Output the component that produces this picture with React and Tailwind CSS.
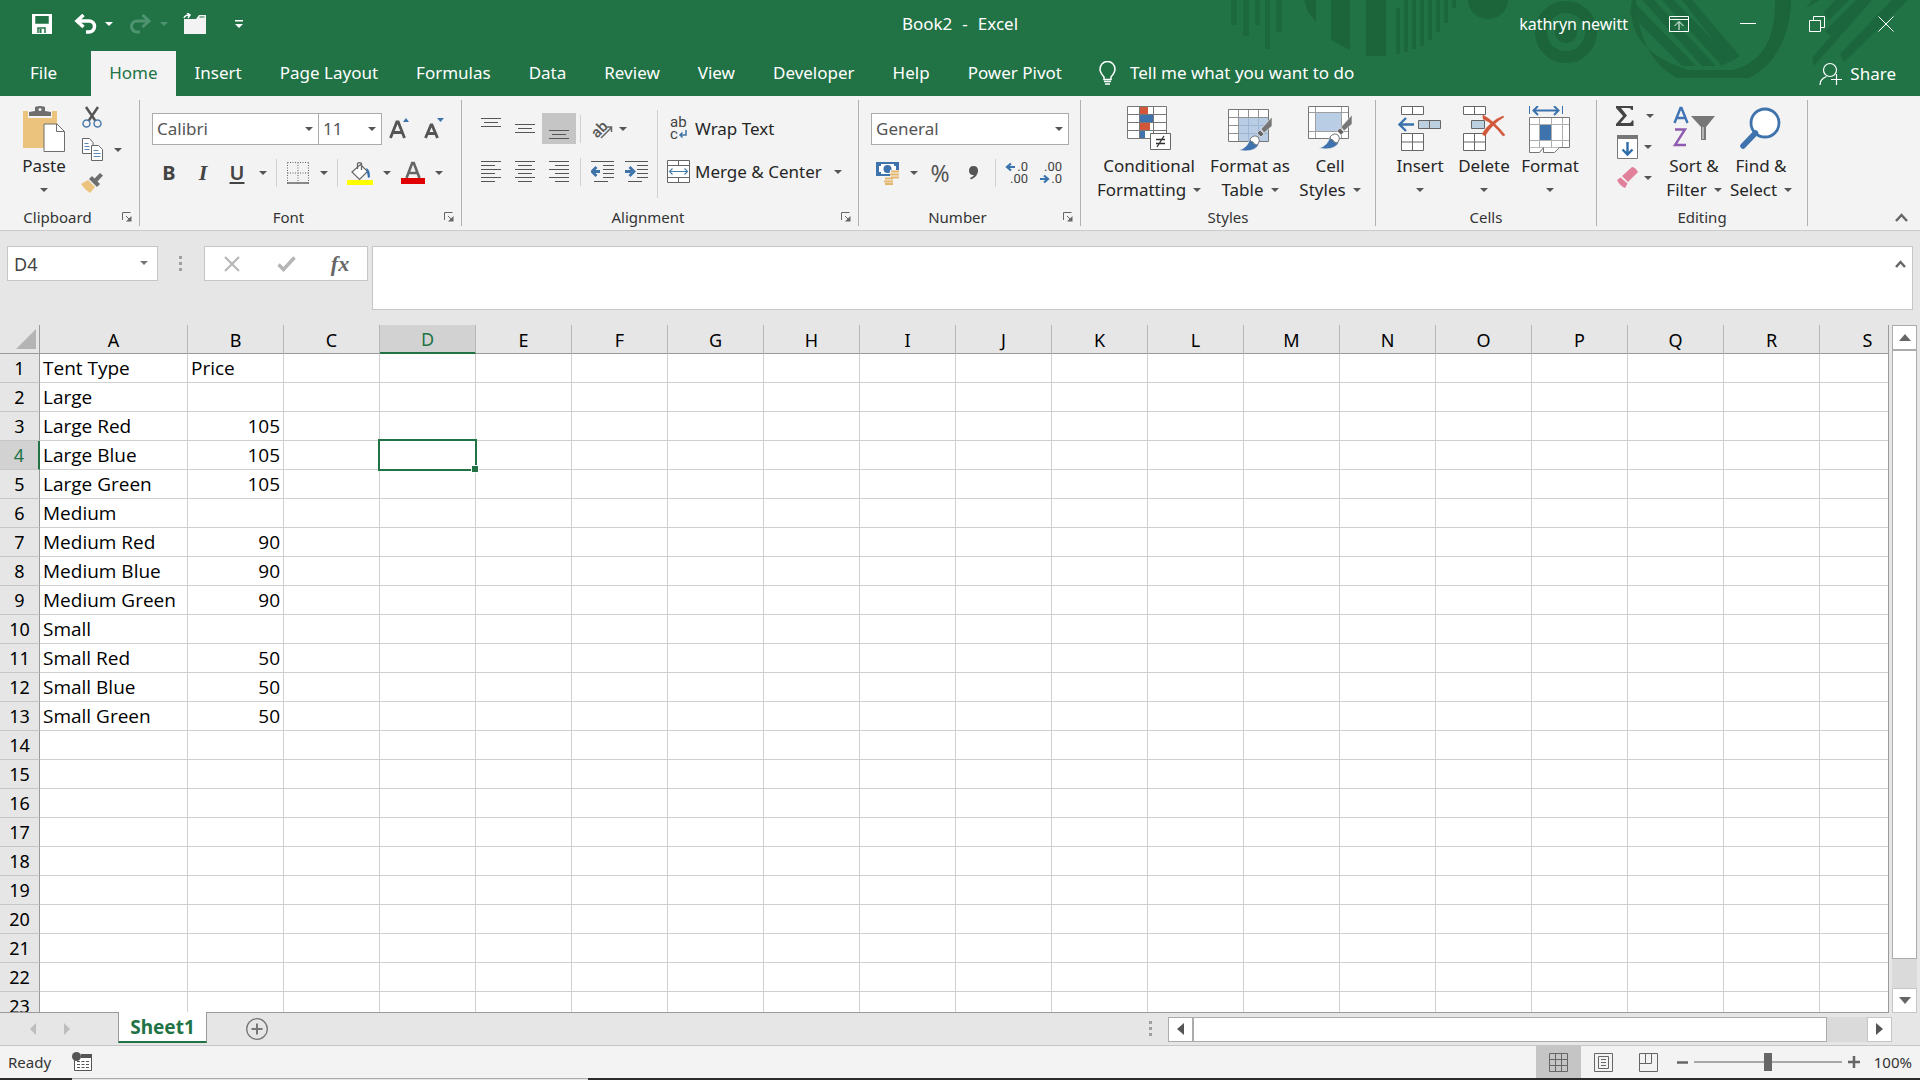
import { useState } from 'react';
import clsx from 'clsx';

const TABS = ['File', 'Home', 'Insert', 'Page Layout', 'Formulas', 'Data', 'Review', 'View', 'Developer', 'Help', 'Power Pivot'];
const COLUMNS = 'ABCDEFGHIJKLMNOPQRS'.split('');
const ROW_COUNT = 23;

const SHEET = {
  A1: 'Tent Type', B1: 'Price',
  A2: 'Large',
  A3: 'Large Red', B3: 105,
  A4: 'Large Blue', B4: 105,
  A5: 'Large Green', B5: 105,
  A6: 'Medium',
  A7: 'Medium Red', B7: 90,
  A8: 'Medium Blue', B8: 90,
  A9: 'Medium Green', B9: 90,
  A10: 'Small',
  A11: 'Small Red', B11: 50,
  A12: 'Small Blue', B12: 50,
  A13: 'Small Green', B13: 50,
};

/* ---------- shared bits ---------- */

function Caret({ className = 'text-[#555]' }) {
  return (
    <svg width="8" height="4" viewBox="0 0 8 4" className={clsx('shrink-0', className)}>
      <path d="M0 0h8L4 4z" fill="currentColor" />
    </svg>
  );
}

function Tool({ label, active, className = 'w-[34px]', children }) {
  return (
    <button
      type="button"
      aria-label={label}
      className={clsx('h-full flex items-center justify-center shrink-0', className, active && 'bg-[#c5c5c5]')}
    >
      {children}
    </button>
  );
}

function CaretTool({ label }) {
  return (
    <Tool label={label} className="w-[18px]">
      <Caret />
    </Tool>
  );
}

function Divider({ className = 'h-7' }) {
  return <div className={clsx('w-px mx-1 bg-[#d0d0d0] shrink-0 self-center', className)} />;
}

function BigButton({ icon, lines, className }) {
  return (
    <button type="button" className={clsx('flex flex-col items-center shrink-0 pt-1.5 text-[17px] leading-6 text-[#262626]', className)}>
      <span className="h-12 flex justify-center">{icon}</span>
      <span className="whitespace-nowrap">{lines[0]}</span>
      <span className="h-6 flex items-center gap-[7px] whitespace-nowrap">
        {lines[1]}
        <Caret />
      </span>
    </button>
  );
}

function Group({ title, launcher, className, children }) {
  return (
    <section className="flex flex-col border-r border-[#b1b1b1] shrink-0" aria-label={title}>
      <div className={clsx('h-[108px] flex items-start', className)}>{children}</div>
      <div className="flex items-center h-[18px]">
        <span className="flex-1 text-center text-[15px] leading-5 text-[#333]">{title}</span>
        {launcher && (
          <button type="button" aria-label={`${title} settings`} className="w-6 flex justify-center">
            <svg width="10" height="10" viewBox="0 0 10 10" fill="none" stroke="#666">
              <path d="M.5 8V.5H8.500M4 4l4 4" />
              <path d="M9.500 4v5.500H4z" fill="#666" stroke="none" />
            </svg>
          </button>
        )}
      </div>
    </section>
  );
}

function SelectBox({ label, value, className }) {
  return (
    <div className={clsx('relative h-8', className)}>
      <select
        aria-label={label}
        defaultValue={value}
        className="appearance-none w-full h-full bg-white border border-[#ababab] pl-1 text-[17px] text-[#555] outline-none"
      >
        <option>{value}</option>
      </select>
      <span className="absolute right-1.5 top-3.5 pointer-events-none">
        <Caret />
      </span>
    </div>
  );
}

/* ---------- title bar ---------- */

function TitleArt() {
  return (
    <svg className="absolute right-0 top-0 opacity-80" width="700" height="96" viewBox="1220 0 700 96" fill="#1b6239">
      <path d="M1231 0h6v25h-6zM1243 0h6v36h-6zM1255 0h5v25h-5zM1265 0h5v49h-5zM1276 0h6v32h-6z" opacity=".7" />
      <path d="M1304 0h12v22l-8-10zM1331 0h19v50l-19-10zM1366 0h20v56h-20z" />
      <path d="M1396 8h4v46h-4zM1404 0h4v52h-4zM1412 0h4v49h-4zM1420 0h4v46h-4zM1428 0h4v40h-4zM1436 0h4v32h-4zM1444 0h4v23h-4zM1452 0h4v8h-4z" opacity=".8" />
      <path d="M1468 0a20 19 0 0 0 40 0z" />
      <circle cx="1566" cy="32" r="25" fill="none" stroke="#1b6239" strokeWidth="12" />
      <circle cx="1566" cy="32" r="11" />
      <path d="M1608 0h24q-6 44 40 64l16 6h45q44-12 42-70h16v8q-6 52-42 70h-72q-38-20-41-78z" />
      <path d="M1632 0l64 66h-14l-52-52zM1642 0h12l62 66h-14zM1662 0h12l58 60-10 6zM1682 0h10l48 56-10 6z" opacity=".85" />
      <path d="M1820 0h-8l-6 8zM1835 0h14l-20 20-6-7zM1872 0l-58 66-2-8 50-58zM1892 0h16l-64 62-4-8zM1856 0h10l-36 36-5-5z" opacity=".85" />
    </svg>
  );
}

function TitleBar() {
  return (
    <div className="relative h-[47px] mb-1 flex items-center text-white text-[16px]">
      <div className="flex-1">
        <div className="flex items-center pl-2.5">
          <Tool label="Save" className="w-16">
            <svg width="20" height="20" viewBox="0 0 20 20" fill="none" stroke="#fff" strokeWidth="2">
              <path d="M1 1h18v18H1z" />
              <path d="M1 11h18v8H1z" fill="#fff" stroke="none" />
              <path d="M6 19v-5h7v5" stroke="#217346" strokeWidth="1.5" />
              <path d="M8.500 15v4" stroke="#217346" />
              <path d="M2.500 1v9.500h15V1" strokeWidth="1.500" />
            </svg>
          </Tool>
          <Tool label="Undo" className="w-6">
            <svg width="24" height="20" viewBox="0 0 24 20" fill="none" stroke="#fff" strokeWidth="3.500">
              <path d="M4 7h11a5.500 5.500 0 0 1 0 11h-3" />
              <path d="M9.500 1L3 7l6.500 6" />
            </svg>
          </Tool>
          <Tool label="Undo history" className="w-[22px]"><Caret className="text-white" /></Tool>
          <Tool label="Redo" className="w-10">
            <svg width="24" height="20" viewBox="0 0 24 20" fill="none" stroke="#4f9370" strokeWidth="3">
              <path d="M20 7H9a5.500 5.500 0 0 0 0 11h3" />
              <path d="M14.500 1L21 7l-6.500 6" />
            </svg>
          </Tool>
          <Tool label="Redo history" className="w-2"><Caret className="text-[#4f9370]" /></Tool>
          <Tool label="Open" className="w-[54px]">
            <svg width="24" height="22" viewBox="0 0 24 22">
              <path d="M1 6h12l3-4h7v19H1z" fill="#f3f3f3" />
              <path d="M16.500 4h5" stroke="#217346" />
              <path d="M1 5q1-3 5-3M4 0l3 2-2 3" stroke="#fff" strokeWidth="1.500" fill="none" />
            </svg>
          </Tool>
          <Tool label="Customize Quick Access Toolbar" className="w-[34px]">
            <svg width="8" height="8" viewBox="0 0 8 8" fill="#fff">
              <path d="M0 0h8v1.500H0zM0 4h8L4 8z" />
            </svg>
          </Tool>
        </div>
      </div>
      <h1 className="flex gap-2.5 text-[17px]">
        <span>Book2</span>
        <span>-</span>
        <span>Excel</span>
      </h1>
      <div className="flex-1">
        <div className="flex items-center justify-end">
          <span className="mr-4">kathryn newitt</span>
          <Tool label="Ribbon Display Options" className="w-[69px]">
            <svg width="20" height="16" viewBox="0 0 20 16" fill="none" stroke="#fff">
              <path d="M.5.5h19v15H.5zM.5 3.500h19M10 14V6M5.500 10L10 5.500l4.500 4.500" />
            </svg>
          </Tool>
          <Tool label="Minimize" className="w-[69px]">
            <svg width="16" height="2" viewBox="0 0 16 2"><path d="M0 .5h16" stroke="#fff" /></svg>
          </Tool>
          <Tool label="Restore" className="w-[69px]">
            <svg width="16" height="16" viewBox="0 0 16 16" fill="none" stroke="#fff">
              <path d="M.5 4.500h11v11H.5zM4.500 4.500v-4h11v11h-4" />
            </svg>
          </Tool>
          <Tool label="Close" className="w-[69px]">
            <svg width="16" height="16" viewBox="0 0 16 16" stroke="#fff"><path d="M.5.5l15 15M15.500.5l-15 15" /></svg>
          </Tool>
        </div>
      </div>
    </div>
  );
}

function TabRow() {
  return (
    <nav className="relative h-[45px] flex items-center text-white text-[17px]">
      {TABS.map((tab) => (
        <button
          key={tab}
          type="button"
          className={clsx(
            'h-full pb-0.5 whitespace-nowrap',
            tab === 'File' && 'pl-[30px] pr-[34px]',
            tab === 'Home' && 'px-[18px] bg-[#f3f3f3] text-[#217346]',
            tab !== 'File' && tab !== 'Home' && 'px-[19px]'
          )}
        >
          {tab}
        </button>
      ))}
      <button type="button" className="h-full pb-0.5 flex items-center gap-3.5 pl-[18px] whitespace-nowrap">
        <svg width="17" height="24" viewBox="0 0 17 24" fill="none" stroke="#fff" strokeWidth="1.500">
          <path d="M5 18.500V16Q1 11.500 1 8a7.500 7.500 0 0 1 15 0q0 3.500-4 8v2.500zM5 20.500h7M6 23h5" />
        </svg>
        Tell me what you want to do
      </button>
      <button type="button" className="ml-auto mr-6 h-full flex items-center gap-2">
        <svg width="23" height="24" viewBox="0 0 23 24" fill="none" stroke="#fff" strokeWidth="1.200">
          <circle cx="11" cy="8" r="6.500" />
          <path d="M1 23q0-6 6.500-8.500M12 17.500h11M17.500 12v11" />
        </svg>
        Share
      </button>
    </nav>
  );
}

/* ---------- ribbon icons ---------- */

const PasteIcon = (
  <svg width="42" height="46" viewBox="0 0 42 46">
    <path d="M0 5h34v37H0z" fill="#ebc37c" />
    <path d="M5 5h24v7H5z" fill="#f3f3f3" />
    <path d="M6 10V6l6-1V1q5-2 10 0v4l6 1v4z" fill="#6e6e6e" />
    <circle cx="17" cy="3.500" r="1.500" fill="#f3f3f3" />
    <path d="M21 18h13l7.500 7.500v20H21z" fill="#fff" stroke="#6e6e6e" />
    <path d="M33.500 18v7.500h8" fill="none" stroke="#6e6e6e" />
  </svg>
);

const CutIcon = (
  <svg width="20" height="22" viewBox="0 0 20 22" fill="none">
    <path d="M4 1l9.500 14M16 1L6.500 15" stroke="#555" strokeWidth="2.500" />
    <circle cx="4.500" cy="17.500" r="3.500" stroke="#4e7cab" strokeWidth="1.500" />
    <circle cx="15.500" cy="17.500" r="3.500" stroke="#4e7cab" strokeWidth="1.500" />
  </svg>
);

const CopyIcon = (
  <svg width="21" height="23" viewBox="0 0 21 23" fill="#fff" stroke="#666">
    <path d="M.5.500h7l3.500 4v11H.5z" />
    <path d="M2.500 5.500h4M2.500 8.500h5M2.500 11.500h5" stroke="#5b87b0" />
    <path d="M9.500 7.500h7l4 4v11h-11z" />
    <path d="M11.500 12.500h5M11.500 15.500h7M11.500 18.500h7" stroke="#5b87b0" />
  </svg>
);

const PainterIcon = (
  <svg width="22" height="20" viewBox="0 0 22 20">
    <path d="M0 11l7-4 7 7-5 6Q3 16 0 11z" fill="#ebc37c" />
    <path d="M8 6l3-3 8 8-3 3z" fill="#6e6e6e" />
    <path d="M13 6l6-6 3 2.500-6 6.500z" fill="#6e6e6e" />
  </svg>
);

const BordersIcon = (
  <svg width="22" height="22" viewBox="0 0 22 22" fill="none" stroke="#666">
    <path d="M.5.5h21M.5.5v21M21.500.5v21M11 .5v21M.5 11h21" strokeDasharray="1 1.500" />
    <path d="M0 21h22" strokeWidth="1.500" />
  </svg>
);

const FillIcon = (
  <svg width="26" height="25" viewBox="0 0 26 25" fill="none">
    <path d="M5 11l8.500-7.500 7 7-8 8z" fill="#fff" stroke="#666" strokeWidth="1.200" />
    <path d="M10.500 8V2.500a2.500 2 0 0 1 4 0V9" stroke="#666" strokeWidth="1.300" />
    <path d="M19 7q4 1 4 9l-2 1-1-6z" fill="#2f6db0" />
    <path d="M0 19h26v5H0z" fill="#ff0" />
  </svg>
);

const FontColorIcon = (
  <svg width="26" height="24" viewBox="0 0 26 24" fill="none">
    <path d="M6.500 17L12.200 2h1.600L19.500 17M8.500 12h9" stroke="#666" strokeWidth="2.600" />
    <path d="M1 17h24v6H1z" fill="#e00000" />
  </svg>
);

function FontSizeIcon({ grow }) {
  return (
    <svg width="22" height="22" viewBox="0 0 22 22" fill="none">
      <path d={grow ? 'M1.500 20L7.800 4h1.400L15.500 20M4 14.500h9.500' : 'M2.500 20L8 7h1l5.500 13M4.500 15.500h8'} stroke="#555" strokeWidth="2.800" />
      <path d={grow ? 'M14 4h6l-3-4z' : 'M14 0h7l-3.500 4z'} fill="#3b73ad" />
    </svg>
  );
}

// rows: [x, y, width] of every rule
function Lines({ rows }) {
  return (
    <svg width="20" height="22" viewBox="0 0 20 22" stroke="#555">
      {rows.map(([x, y, w]) => (
        <path key={y} d={`M${x} ${y + 0.5}h${w}`} />
      ))}
    </svg>
  );
}

const VALIGN = {
  Top: [[0, 0, 20], [3, 4, 14], [0, 8, 20]],
  Middle: [[0, 6, 20], [3, 10, 14], [0, 14, 20]],
  Bottom: [[0, 12, 20], [3, 16, 14], [0, 20, 20]],
};

const HALIGN = {
  Left: [[0, 0, 20], [0, 4, 14], [0, 8, 20], [0, 12, 14], [0, 16, 20], [0, 20, 14]],
  Center: [[0, 0, 20], [3, 4, 14], [0, 8, 20], [3, 12, 14], [0, 16, 20], [3, 20, 14]],
  Right: [[0, 0, 20], [6, 4, 14], [0, 8, 20], [6, 12, 14], [0, 16, 20], [6, 20, 14]],
};

function IndentIcon({ increase }) {
  return (
    <svg width="23" height="22" viewBox="0 0 23 22" fill="none" stroke="#555">
      <path d="M0 .5h23M12 4.500h11M12 8.500h11M12 12.500h11M12 16.500h11M3 20.500h14" />
      <path d={increase ? 'M0 10.500h7M4.500 6l4.500 4.500-4.500 4.500' : 'M9 10.500H2M5.500 6L1 10.500 5.500 15'} stroke="#3e74a8" strokeWidth="2.800" />
    </svg>
  );
}

const OrientationIcon = (
  <svg width="21" height="20" viewBox="0 0 21 20" fill="none" className="overflow-visible">
    <text x="1" y="18" fontSize="15" fill="#555" fontFamily="Roboto, sans-serif" fontWeight="500" transform="rotate(-45 5 14)">ab</text>
    <path d="M9 19L19 9M14 8h5.500v5" stroke="#666" strokeWidth="1.500" />
  </svg>
);

const WrapIcon = (
  <svg width="24" height="24" viewBox="0 0 24 24" fill="none" fontFamily="Roboto, sans-serif" className="overflow-visible">
    <text x="3" y="10" fontSize="15" fill="#444">ab</text>
    <text x="3" y="22" fontSize="15" fill="#444">c</text>
    <path d="M19 13v5h-6M15.500 15.500L13 18l2.500 2.500" stroke="#3e74a8" strokeWidth="1.500" />
  </svg>
);

const MergeIcon = (
  <svg width="24" height="24" viewBox="0 0 24 24" fill="#fff" stroke="#666">
    <path d="M.5.5h22v22H.5zM.5 5.500h22M.5 17.500h22M11.500.5v5M11.500 17.500v5" />
    <path d="M2.500 11.500h18M5.500 8.500l-3 3 3 3M17.500 8.500l3 3-3 3" fill="none" stroke="#4a80a8" strokeWidth="1.200" />
  </svg>
);

const AccountingIcon = (
  <svg width="24" height="23" viewBox="0 0 24 23" fill="none">
    <path d="M0 0h23v14H0z" fill="#3f73ad" />
    <path d="M3 4h2V2h13v2h2v6h-2v2H5v-2H3z" fill="#fff" />
    <circle cx="11.500" cy="7" r="4" fill="#3f73ad" />
    <path d="M14 8h10v9H14zM8 15h10v8H8z" fill="#f3f3f3" />
    <path d="M15 9.500h8M14 12.500h9M15 15.500h8M9 16.500h8M8 19.500h9M9 22h8" stroke="#e3b56a" strokeWidth="2" />
  </svg>
);

function DecimalIcon({ increase }) {
  return (
    <svg width="24" height="24" viewBox="0 0 24 24" fill="none" fontFamily="Roboto, sans-serif" fontSize="13" className="overflow-visible">
      <text x="23" y="10" textAnchor="end" fill="#444">{increase ? '.0' : '.00'}</text>
      <text x="23" y="22" textAnchor="end" fill="#444">{increase ? '.00' : '.0'}</text>
      <path d={increase ? 'M10 6H3M6 2.500L2 6l4 3.500' : 'M1 18h7M5 14.500L9 18l-4 3.500'} stroke="#3b73ad" strokeWidth="2.200" />
    </svg>
  );
}

// diagonal paint brush laid over the table icons
const Brush = (
  <g>
    <path d="M11 44q9-2 11-12l4-1 5 5-1 4q-6 7-19 4z" fill="#3f73ad" stroke="#f3f3f3" strokeWidth=".6" />
    <path d="M22 33q4-5 8-2 3 4-1 8-4-1-4-3-3 0-3-3z" fill="#fff" />
    <path d="M29 27l3-3 4 4-3 3z" fill="#666" stroke="#f3f3f3" strokeWidth=".6" />
    <path d="M33 23l11-12v9l-8 7z" fill="#777" stroke="#f3f3f3" strokeWidth=".6" />
  </g>
);

const ConditionalIcon = (
  <svg width="44" height="45" viewBox="0 0 44 45" fill="#fff" stroke="#777">
    <path d="M.5.5h39v32H.5z" />
    <path d="M.5 8.500h39M.5 16.500h39M.5 24.500h39M12.500.5v32M26.500.5v32" />
    <path d="M13 1h8v7h-8zM13 17h10v7H13z" fill="#d1573b" stroke="none" />
    <path d="M13 9h13v7H13zM13 25h5v7h-5z" fill="#3f73ad" stroke="none" />
    <path d="M23.500 27.500h20v16h-20z" stroke="#666" />
    <path d="M29 33.500h9M29 37.500h9M37 30l-7 11" stroke="#333" strokeWidth="1.300" />
  </svg>
);

const TableIcon = (
  <svg width="44" height="46" viewBox="0 0 44 46" fill="#fff" stroke="#777">
    <path d="M.5 3.500h40v32H.5z" />
    <path d="M11 12h29v23H11z" fill="#b9cde5" stroke="none" />
    <path d="M.5 11.500h40M.5 19.500h10M.5 27.500h10M10.500 3.500v32M20.500 3.500v8M30.500 3.500v8" opacity=".8" />
    <path d="M11 19.500h29M11 27.500h29M20.500 12v23M30.500 12v23" stroke="#9db6d3" />
    {Brush}
  </svg>
);

const CellStylesIcon = (
  <svg width="44" height="46" viewBox="0 0 44 46" fill="#fff" stroke="#777">
    <path d="M.5.5h40v32H.5z" />
    <path d="M.5 6.500h40M.5 25.500h40M7.500.5v32M33.500.5v32" opacity=".7" />
    <path d="M8 7h25v18H8z" fill="#b9cde5" stroke="none" />
    <g transform="translate(0 -2)">{Brush}</g>
  </svg>
);

const InsertIcon = (
  <svg width="44" height="46" viewBox="0 0 44 46" fill="#fff" stroke="#666">
    <path d="M3.500.5h22v8h-22zM14.500.5v8M3.500 27.500h22v17h-22zM14.500 27.500v17M3.500 36h22" />
    <path d="M20.500 14.500h22v8h-22zM31.500 14.500v8" fill="#bcd0df" />
    <path d="M16 18.500H2M8 12l-6.500 6.500L8 25" fill="none" stroke="#3b73ad" strokeWidth="2.400" />
  </svg>
);

const DeleteIcon = (
  <svg width="44" height="46" viewBox="0 0 44 46" fill="#fff" stroke="#666">
    <path d="M1.500.5h22v8h-22zM12.500.5v8M1.500 27.500h22v17h-22zM12.500 27.500v17M1.500 36h22" />
    <path d="M9.500 14.500h13v8h-13z" fill="#bcd0df" />
    <path d="M21 9q11 6 22 20l-2 1Q31 17 21 13zM42 11Q30 18 23 30l-3-2Q28 15 41 10z" fill="#d1573b" stroke="#d1573b" strokeWidth=".5" />
  </svg>
);

const FormatIcon = (
  <svg width="42" height="48" viewBox="0 0 42 48" fill="#fff" stroke="#777">
    <path d="M.5 11.500h40v30H.5z" />
    <path d="M.5 18.500h40M.5 34.500h40M10.500 11.500v30M22.500 11.500v30M33.500 11.500v30" opacity=".6" />
    <path d="M.5 41.500v5h10l4-5v5h11l5-5" />
    <path d="M11 19h11v15H11z" fill="#3f73ad" stroke="none" />
    <path d="M.5 0v8M33.500 0v8" stroke="#3b73ad" />
    <path d="M5 4.500h24M9 0L4.500 4.500 9 9M25 0l4.500 4.500L25 9" fill="none" stroke="#3b73ad" strokeWidth="2" />
  </svg>
);

const SigmaIcon = (
  <svg width="18" height="20" viewBox="0 0 18 20">
    <path d="M0 0h17v4h-1.500q-.5-2-3-2H5l6 7.500L4.500 17H13q2.500 0 3-2.500H17.500V20H0v-2l7-8L0 2z" fill="#444" />
  </svg>
);

const FillDownIcon = (
  <svg width="21" height="24" viewBox="0 0 21 24" fill="#fff">
    <path d="M.5.5h20v23H.5z" stroke="#777" />
    <path d="M0 0h21v4H0z" fill="#777" />
    <path d="M10.500 7v12M5.500 14.500l5 5 5-5" fill="none" stroke="#2f6da8" strokeWidth="2.400" />
  </svg>
);

const EraserIcon = (
  <svg width="21" height="21" viewBox="0 0 21 21" fill="#e0809b">
    <path d="M5 9l10-9q3 0 6 5l-10 10zM3.500 10.500l7 6L8 21q-5-2-8-8z" />
  </svg>
);

const SortIcon = (
  <svg width="42" height="42" viewBox="0 0 42 42" fill="none">
    <path d="M1.500 17L7.500 2h1l6 15M3.500 12h9" stroke="#3f73b5" strokeWidth="2.400" />
    <path d="M2 23.500h10L2 39h11" stroke="#8e5bb0" strokeWidth="2.400" />
    <path d="M18 10h24L33 21v13h-5V21z" fill="#777" />
    <path d="M30 21v12" stroke="#f3f3f3" />
  </svg>
);

const FindIcon = (
  <svg width="42" height="44" viewBox="0 0 42 44" fill="none">
    <circle cx="25" cy="17" r="14" fill="#fff" stroke="#3f73ad" strokeWidth="2.800" />
    <path d="M15.500 27L3 40" stroke="#3f73ad" strokeWidth="5.500" strokeLinecap="round" />
  </svg>
);

/* ---------- ribbon ---------- */

function Ribbon() {
  return (
    <div className="flex bg-[#f3f3f3] border-b border-[#cbcbcb] py-1">
      <Group title="Clipboard" launcher className="pl-4 pr-3">
        <BigButton icon={PasteIcon} lines={['Paste']} className="w-14" />
        <div className="ml-[3px] flex flex-col">
          <div className="flex h-[33px]"><Tool label="Cut">{CutIcon}</Tool></div>
          <div className="flex h-[33px]">
            <Tool label="Copy">{CopyIcon}</Tool>
            <CaretTool label="Copy options" />
          </div>
          <div className="flex h-[33px]"><Tool label="Format Painter">{PainterIcon}</Tool></div>
        </div>
      </Group>

      <Group title="Font" launcher className="flex-col gap-3 pt-[13px] pl-3 pr-[11px]">
        <div className="flex h-8">
          <SelectBox label="Font" value="Calibri" className="w-[167px]" />
          <SelectBox label="Font size" value="11" className="w-16 -ml-px" />
          <Tool label="Increase Font Size" className="w-9"><FontSizeIcon grow /></Tool>
          <Tool label="Decrease Font Size" className="w-8"><FontSizeIcon /></Tool>
        </div>
        <div className="flex h-8 text-xl text-[#444]">
          <Tool label="Bold"><span className="font-bold">B</span></Tool>
          <Tool label="Italic"><span className="font-['Liberation_Serif',serif] italic font-bold text-[22px]">I</span></Tool>
          <Tool label="Underline"><span className="font-semibold underline underline-offset-2">U</span></Tool>
          <CaretTool label="Underline options" />
          <Divider />
          <Tool label="Borders">{BordersIcon}</Tool>
          <CaretTool label="Border options" />
          <Divider />
          <Tool label="Fill Color" className="w-9">{FillIcon}</Tool>
          <CaretTool label="Fill Color options" />
          <Tool label="Font Color">{FontColorIcon}</Tool>
          <CaretTool label="Font Color options" />
        </div>
      </Group>

      <Group title="Alignment" launcher className="pl-3 pr-[11px]">
        <div className="flex flex-col gap-3 pt-[13px]">
          <div className="flex h-[31px]">
            {Object.keys(VALIGN).map((side) => (
              <Tool key={side} label={`${side} Align`} active={side === 'Bottom'}><Lines rows={VALIGN[side]} /></Tool>
            ))}
            <Divider />
            <Tool label="Orientation" className="w-11 gap-1.5 pl-1">{OrientationIcon}<Caret /></Tool>
          </div>
          <div className="flex h-8">
            {Object.keys(HALIGN).map((side) => (
              <Tool key={side} label={`Align ${side}`}><Lines rows={HALIGN[side]} /></Tool>
            ))}
            <Divider />
            <Tool label="Decrease Indent"><IndentIcon /></Tool>
            <Tool label="Increase Indent"><IndentIcon increase /></Tool>
          </div>
        </div>
        <Divider className="h-[88px]" />
        <div className="flex flex-col gap-3 pt-[13px] pl-[5px] text-[17px] text-[#262626]">
          <button type="button" className="flex items-center gap-1 h-[31px] whitespace-nowrap">{WrapIcon}Wrap Text</button>
          <div className="flex h-8">
            <button type="button" className="flex items-center gap-1 w-[162px] whitespace-nowrap">{MergeIcon}Merge &amp; Center</button>
            <CaretTool label="Merge options" />
          </div>
        </div>
      </Group>

      <Group title="Number" launcher className="flex-col gap-3 pt-[13px] pl-3 pr-[11px]">
        <SelectBox label="Number format" value="General" className="w-[198px]" />
        <div className="flex h-8 text-[#555]">
          <Tool label="Accounting Number Format">{AccountingIcon}</Tool>
          <CaretTool label="Accounting options" />
          <Tool label="Percent Style"><span className="text-[23px]">%</span></Tool>
          <Tool label="Comma Style">
            <svg width="10" height="14" viewBox="0 0 10 14"><path d="M4 9a4.500 4.500 0 1 1 5-5q.5 6-7 9.500L1 12q3.500-1.500 4-3z" fill="#555" /></svg>
          </Tool>
          <Divider />
          <Tool label="Increase Decimal"><DecimalIcon increase /></Tool>
          <Tool label="Decrease Decimal"><DecimalIcon /></Tool>
        </div>
      </Group>

      <Group title="Styles" className="pl-3 pr-2.5">
        <BigButton icon={ConditionalIcon} lines={['Conditional', 'Formatting']} className="w-28" />
        <BigButton icon={TableIcon} lines={['Format as', 'Table']} className="w-[90px]" />
        <BigButton icon={CellStylesIcon} lines={['Cell', 'Styles']} className="w-[70px]" />
      </Group>

      <Group title="Cells" className="px-3">
        <BigButton icon={InsertIcon} lines={['Insert']} className="w-16" />
        <BigButton icon={DeleteIcon} lines={['Delete']} className="w-16" />
        <BigButton icon={FormatIcon} lines={['Format']} className="w-[68px]" />
      </Group>

      <Group title="Editing" className="px-3">
        <div className="flex flex-col">
          <div className="flex h-[31px]"><Tool label="AutoSum" className="w-[52px] gap-3">{SigmaIcon}<Caret /></Tool></div>
          <div className="flex h-[31px]"><Tool label="Fill" className="w-[50px] gap-1.5">{FillDownIcon}<Caret /></Tool></div>
          <div className="flex h-[31px]"><Tool label="Clear" className="w-[50px] gap-1.5">{EraserIcon}<Caret /></Tool></div>
        </div>
        <BigButton icon={SortIcon} lines={['Sort &', 'Filter']} className="w-[66px]" />
        <BigButton icon={FindIcon} lines={['Find &', 'Select']} className="w-[68px]" />
      </Group>

      <button type="button" aria-label="Collapse the Ribbon" className="ml-auto mr-3 mb-1 self-end">
        <svg width="13" height="9" viewBox="0 0 13 9" fill="none" stroke="#666" strokeWidth="2.500"><path d="M1 8l5.500-6L12 8" /></svg>
      </button>
    </div>
  );
}

function Dots() {
  return (
    <svg width="4" height="16" viewBox="0 0 4 16" fill="#a0a0a0">
      <path d="M0 0h3v3H0zM0 6h3v3H0zM0 12h3v3H0z" />
    </svg>
  );
}

function FormulaBar() {
  return (
    <div className="flex items-start py-[15px] px-[7px]">
      <div className="relative w-[151px] h-[35px]">
        <input
          aria-label="Name Box"
          defaultValue="D4"
          className="w-full h-full bg-white border border-[#c6c6c6] pl-1.5 text-[18px] text-[#444] outline-none"
        />
        <span className="absolute right-2.5 top-[15px]"><Caret className="text-[#777]" /></span>
      </div>
      <div className="w-[46px] h-[35px] flex items-center justify-center"><Dots /></div>
      <div className="w-[164px] h-[35px] flex bg-white border border-[#c6c6c6]">
        <Tool label="Cancel" className="w-[54px]">
          <svg width="16" height="16" viewBox="0 0 16 16" stroke="#b5b5b5" strokeWidth="2"><path d="M1 1l14 14M15 1L1 15" /></svg>
        </Tool>
        <Tool label="Enter" className="w-[54px]">
          <svg width="19" height="16" viewBox="0 0 19 16" fill="none" stroke="#b5b5b5" strokeWidth="3.500"><path d="M1.500 8.500l5 5L17.500 1.500" /></svg>
        </Tool>
        <Tool label="Insert Function" className="w-[54px]">
          <span className="font-['Liberation_Serif',serif] italic font-bold text-[22px] text-[#666]">fx</span>
        </Tool>
      </div>
      <div className="relative flex-1 ml-1 h-16">
        <textarea aria-label="Formula Bar" className="block w-full h-full resize-none bg-white border border-[#c6c6c6] px-2 text-[17px] outline-none" />
        <button type="button" aria-label="Collapse Formula Bar" className="absolute right-[7px] top-3.5">
          <svg width="11" height="8" viewBox="0 0 11 8" fill="none" stroke="#666" strokeWidth="2.500"><path d="M1 7l4.500-5L10 7" /></svg>
        </button>
      </div>
    </div>
  );
}

/* ---------- grid ---------- */

function Sheet({ selected, onSelect }) {
  const selectedCol = selected[0];
  const selectedRow = Number(selected.slice(1));

  return (
    <div className="flex-1 min-w-0 overflow-hidden border-r border-b border-[#9a9a9a]">
      <table className="table-fixed border-separate border-spacing-0 w-max font-['Open_Sans',sans-serif] text-[19px] leading-7 text-black">
        <colgroup>
          <col className="w-10" />
          {COLUMNS.map((c) => (
            <col key={c} className={c === 'A' ? 'w-[148px]' : 'w-24'} />
          ))}
        </colgroup>
        <thead>
          <tr className="font-['Noto_Sans',sans-serif] text-[18px]">
            <th className="bg-[#e6e6e6] border-r border-b border-[#9a9a9a] p-0 align-bottom">
              <svg width="20" height="20" viewBox="0 0 20 20" className="ml-4 mb-1"><path d="M20 0v20H0z" fill="#b4b4b4" /></svg>
            </th>
            {COLUMNS.map((c) => (
              <th
                key={c}
                scope="col"
                className={clsx(
                  'h-[29px] pt-0.5 px-0 pb-0 font-normal leading-[25px] border-r border-r-[#b8b8b8]',
                  c === selectedCol
                    ? 'bg-[#d2d2d2] text-[#217346] border-b-2 border-b-[#217346]'
                    : 'bg-[#e6e6e6] border-b border-b-[#9a9a9a]'
                )}
              >
                {c}
              </th>
            ))}
          </tr>
        </thead>
        <tbody>
          {Array.from({ length: ROW_COUNT }, (_, i) => i + 1).map((row) => (
            <tr key={row}>
              <th
                scope="row"
                className={clsx(
                  "h-[29px] p-0 font-normal font-['Noto_Sans',sans-serif] text-[18px] border-b border-b-[#c6c6c6]",
                  row === selectedRow
                    ? 'bg-[#d2d2d2] text-[#217346] border-r-2 border-r-[#217346]'
                    : 'bg-[#e6e6e6] border-r border-r-[#9a9a9a]'
                )}
              >
                {row}
              </th>
              {COLUMNS.map((c) => {
                const id = c + row;
                const value = SHEET[id];
                return (
                  <td
                    key={id}
                    onClick={() => onSelect(id)}
                    className={clsx(
                      'relative px-[3px] py-0 bg-white border-r border-b border-[#d0d0d0] whitespace-nowrap',
                      typeof value === 'number' && 'text-right'
                    )}
                  >
                    {value}
                    {id === selected && (
                      <span className="absolute z-10 -inset-0.5 border-2 border-[#217346]">
                        <span className="absolute -right-[3px] -bottom-[3px] w-1.5 h-1.5 bg-[#217346] outline outline-white" />
                      </span>
                    )}
                  </td>
                );
              })}
            </tr>
          ))}
        </tbody>
      </table>
    </div>
  );
}

function VerticalScroll() {
  return (
    <div className="w-[25px] mx-[3px] flex flex-col bg-[#dadada]">
      <button type="button" aria-label="Scroll up" className="h-[25px] bg-white border border-[#ababab] flex items-center justify-center">
        <svg width="12" height="7" viewBox="0 0 12 7"><path d="M0 7h12L6 0z" fill="#666" /></svg>
      </button>
      <div className="h-[609px] bg-white border border-[#ababab]" />
      <button type="button" aria-label="Scroll down" className="mt-auto h-[25px] bg-white border border-[#c6c6c6] flex items-center justify-center">
        <svg width="12" height="7" viewBox="0 0 12 7"><path d="M0 0h12L6 7z" fill="#666" /></svg>
      </button>
    </div>
  );
}

function SheetTabs() {
  return (
    <div className="h-[33px] flex items-start border-b border-[#c6c6c6]">
      <div className="w-[118px] h-full flex items-center justify-center gap-7 pr-[18px]">
        <button type="button" aria-label="Previous sheet">
          <svg width="6" height="12" viewBox="0 0 6 12"><path d="M6 0v12L0 6z" fill="#bdbdbd" /></svg>
        </button>
        <button type="button" aria-label="Next sheet">
          <svg width="6" height="12" viewBox="0 0 6 12"><path d="M0 0v12l6-6z" fill="#bdbdbd" /></svg>
        </button>
      </div>
      <button type="button" className="w-[89px] h-[31px] -mt-px bg-white border-x border-[#9a9a9a] border-b-2 border-b-[#217346] text-[#217346] font-bold text-[19px] leading-7">
        Sheet1
      </button>
      <button type="button" aria-label="New sheet" className="ml-[39px] mt-[5px]">
        <svg width="22" height="22" viewBox="0 0 22 22" fill="none" stroke="#777">
          <circle cx="11" cy="11" r="10.300" strokeWidth="1.300" />
          <path d="M11 5.500v11M5.500 11h11" strokeWidth="2" />
        </svg>
      </button>
      <div className="ml-auto mr-7 flex items-center w-[743px] h-full">
        <Dots />
        <div className="ml-[15px] flex flex-1 h-[25px] bg-[#dadada]">
          <button type="button" aria-label="Scroll left" className="w-[25px] bg-white border border-[#ababab] flex items-center justify-center">
            <svg width="7" height="12" viewBox="0 0 7 12"><path d="M7 0v12L0 6z" fill="#555" /></svg>
          </button>
          <div className="w-[634px] bg-white border border-[#ababab]" />
          <button type="button" aria-label="Scroll right" className="ml-auto w-[25px] bg-white border border-[#c6c6c6] flex items-center justify-center">
            <svg width="7" height="12" viewBox="0 0 7 12"><path d="M0 0v12l7-6z" fill="#555" /></svg>
          </button>
        </div>
      </div>
    </div>
  );
}

function StatusBar() {
  return (
    <footer className="h-8 flex items-center bg-[#f3f3f3] text-[15px] text-[#333]">
      <span className="pl-2">Ready</span>
      <button type="button" aria-label="Record Macro" className="ml-[21px]">
        <svg width="20" height="20" viewBox="0 0 20 20" fill="none" stroke="#555">
          <path d="M2.500 6v12.500h17v-13" fill="#fff" />
          <path d="M9 2h11v4H9z" fill="#555" stroke="none" />
          <circle cx="4.500" cy="4.500" r="4.500" fill="#555" stroke="none" />
          <path d="M5 9.500h3M9.500 9.500h3M14 9.500h3M5 12.500h3M9.500 12.500h3M14 12.500h3M5 15.500h3M9.500 15.500h3M14 15.500h3" />
        </svg>
      </button>
      <div className="ml-auto h-full flex items-center">
        <Tool label="Normal" active className="w-[45px]">
          <svg width="19" height="19" viewBox="0 0 19 19" fill="none" stroke="#666"><path d="M.5.5h18v18H.5zM.5 6.500h18M.5 12.500h18M6.500.5v18M12.500.5v18" /></svg>
        </Tool>
        <Tool label="Page Layout" className="w-[45px]">
          <svg width="19" height="19" viewBox="0 0 19 19" fill="none" stroke="#666"><path d="M.5.5h18v18H.5zM4.500 3.500h10v12h-10zM7 6.500h5M7 9.500h5M7 12.500h5" /></svg>
        </Tool>
        <Tool label="Page Break Preview" className="w-[45px]">
          <svg width="19" height="19" viewBox="0 0 19 19" fill="none" stroke="#666"><path d="M.5.5h18v18H.5zM.5 10.500h12M6.500.5v10M12.500.5v10" /></svg>
        </Tool>
        <button type="button" aria-label="Zoom Out" className="ml-1.5">
          <svg width="11" height="11" viewBox="0 0 11 11"><path d="M0 5.500h11" stroke="#666" strokeWidth="2.500" /></svg>
        </button>
        <input
          type="range"
          aria-label="Zoom"
          defaultValue="50"
          className="mx-1.5 w-[148px] h-[18px] appearance-none bg-transparent [&::-webkit-slider-runnable-track]:h-0.5 [&::-webkit-slider-runnable-track]:bg-[#a8a8a8] [&::-webkit-slider-thumb]:appearance-none [&::-webkit-slider-thumb]:w-2 [&::-webkit-slider-thumb]:h-[18px] [&::-webkit-slider-thumb]:-mt-2 [&::-webkit-slider-thumb]:bg-[#666]"
        />
        <button type="button" aria-label="Zoom In">
          <svg width="12" height="12" viewBox="0 0 12 12"><path d="M0 6h12M6 0v12" stroke="#666" strokeWidth="2.500" /></svg>
        </button>
        <span className="w-[60px] text-right pr-2">100%</span>
      </div>
    </footer>
  );
}

export default function App() {
  const [selected, setSelected] = useState('D4');

  return (
    <div className="h-screen flex flex-col overflow-hidden bg-[#e6e6e6] font-['Noto_Sans',sans-serif]">
      <header className="relative bg-[#217346]">
        <TitleArt />
        <TitleBar />
        <TabRow />
      </header>
      <Ribbon />
      <FormulaBar />
      <main className="flex-1 min-h-0 flex">
        <Sheet selected={selected} onSelect={setSelected} />
        <VerticalScroll />
      </main>
      <SheetTabs />
      <StatusBar />
      <div className="h-0.5 flex">
        <div className="w-[72px] bg-[#2b2b2b]" />
        <div className="w-[516px] border-t border-[#ababab]" />
        <div className="flex-1 bg-[#2b2b2b]" />
      </div>
    </div>
  );
}
